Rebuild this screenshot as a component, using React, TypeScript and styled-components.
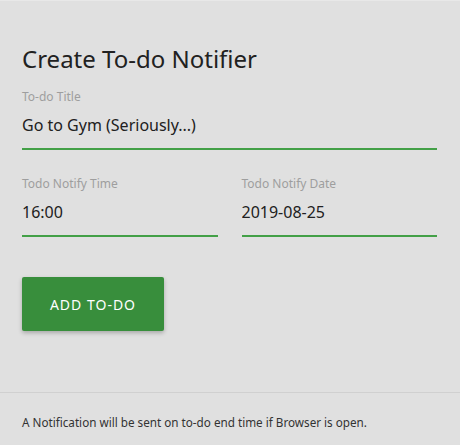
import styled, { createGlobalStyle } from "styled-components";

const GlobalStyle = createGlobalStyle`
  html, body {
    margin: 0;
    padding: 0;
    background: #e0e0e0;
  }
  body {
    font-family: "Noto Sans", "DejaVu Sans", sans-serif;
    color: #212121;
  }
`;

const Card = styled.div`
  width: 460px;
  height: 445px;
  box-sizing: border-box;
  background: #e0e0e0;
  border-top: 1px solid #e8e8e8;
  display: flex;
  flex-direction: column;
`;

const Content = styled.div`
  padding: 42px 23px 0 22px;
  flex: 1;
`;

const Title = styled.h2`
  margin: 0 0 14px;
  font-size: 24px;
  line-height: 32px;
  font-weight: 400;
  color: #212121;
`;

const Row = styled.div`
  display: flex;
  gap: 24px;
  margin-bottom: 26px;
`;

const Field = styled.label`
  flex: 1;
  min-width: 0;
  display: flex;
  flex-direction: column;
`;

const Label = styled.span`
  font-size: 12px;
  line-height: 16px;
  color: #9e9e9e;
`;

const Input = styled.input`
  width: 100%;
  min-width: 0;
  box-sizing: border-box;
  border: none;
  border-bottom: 2px solid #43a047;
  background: transparent;
  outline: none;
  padding: 8px 0 11px;
  font-family: inherit;
  font-size: 16px;
  line-height: 24px;
  color: #212121;
`;

const Button = styled.button`
  margin-top: 14px;
  width: 142px;
  height: 54px;
  border: none;
  border-radius: 2px;
  background: #388e3c;
  color: #fff;
  font-family: inherit;
  font-size: 14px;
  letter-spacing: 1px;
  text-transform: uppercase;
  box-shadow: 0 2px 4px rgba(0, 0, 0, 0.25);
  cursor: pointer;
`;

const Footer = styled.div`
  box-sizing: border-box;
  border-top: 1px solid #d0d0d0;
  padding: 21px 22px 0;
  height: 53px;
  font-size: 11.7px;
  line-height: 16px;
  color: #333;
`;

export default function App() {
  return (
    <>
      <GlobalStyle />
      <Card>
        <Content>
          <Title>Create To-do Notifier</Title>
          <Row>
            <Field>
              <Label>To-do Title</Label>
              <Input defaultValue="Go to Gym (Seriously...)" />
            </Field>
          </Row>
          <Row>
            <Field>
              <Label>Todo Notify Time</Label>
              <Input defaultValue="16:00" />
            </Field>
            <Field>
              <Label>Todo Notify Date</Label>
              <Input defaultValue="2019-08-25" />
            </Field>
          </Row>
          <Button>Add To-do</Button>
        </Content>
        <Footer>A Notification will be sent on to-do end time if Browser is open.</Footer>
      </Card>
    </>
  );
}
